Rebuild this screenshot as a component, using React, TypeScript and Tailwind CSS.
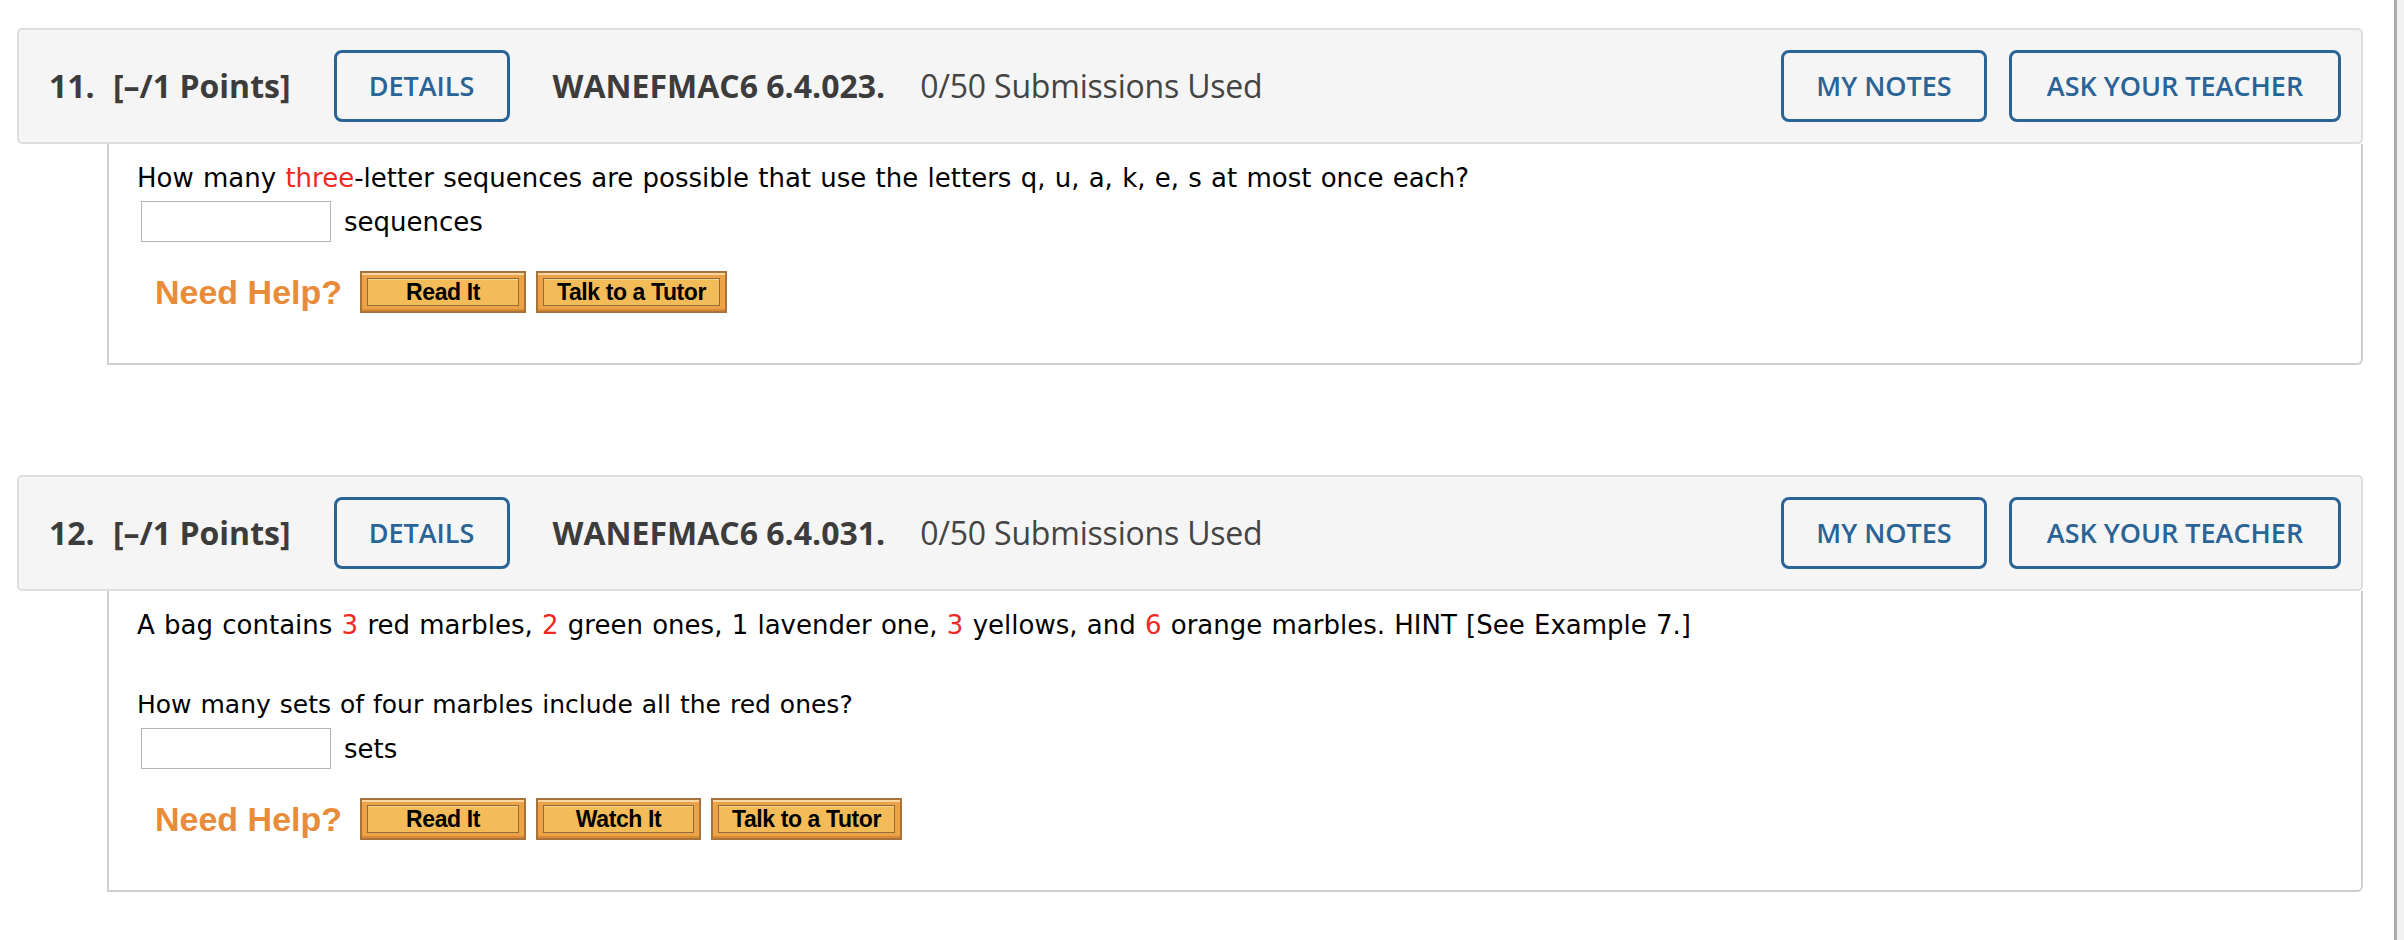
import React from "react";

const Red = ({ children }: { children: React.ReactNode }) => (
  <span className="text-[#ec2a22]">{children}</span>
);

const BlueButton = ({ label, w }: { label: string; w: string }) => (
  <div
    className={`${w} h-[72px] shrink-0 rounded-[8px] border-[3px] border-[#2a6395] flex items-center justify-center text-[27px] font-semibold text-[#2a6395] font-['Open_Sans',sans-serif]`}
  >
    {label}
  </div>
);

const OrangeButton = ({ label, w }: { label: string; w: string }) => (
  <div
    className={`${w} h-[42px] shrink-0 border-2 border-[#a8733b] bg-[#eea246] p-[5px] shadow-[inset_0_2px_0_#fcd6a0,inset_0_-2px_0_#d98a34]`}
  >
    <div className="h-full border border-[#8e6c3e] bg-[#f3bc58] shadow-[inset_0_1px_0_#f8d48a] flex items-center justify-center font-['Liberation_Sans',Arial,sans-serif] font-bold text-[23px] tracking-[-0.4px] text-black leading-none">
      {label}
    </div>
  </div>
);

const Header = ({ num, code }: { num: string; code: string }) => (
  <div className="h-[116px] rounded-[5px] border-2 border-[#dedede] bg-[#f5f5f5] flex items-center pl-[30px] pr-[20px] font-['Open_Sans',sans-serif] text-[32px] text-[#3c3c3c]">
    <span className="w-[64px] shrink-0 font-bold">{num}</span>
    <span className="font-bold">[–/1 Points]</span>
    <div className="ml-[43px]">
      <BlueButton label="DETAILS" w="w-[176px]" />
    </div>
    <span className="ml-[43px] font-bold">{code}</span>
    <span className="ml-[35px] text-[#444444] tracking-[-0.2px]">0/50 Submissions Used</span>
    <div className="flex-1" />
    <BlueButton label="MY NOTES" w="w-[206px]" />
    <div className="ml-[22px]">
      <BlueButton label="ASK YOUR TEACHER" w="w-[332px]" />
    </div>
  </div>
);

const HelpRow = ({ watch }: { watch?: boolean }) => (
  <div className="mt-[29px] flex items-center pl-[18px] [word-spacing:0px]">
    <span className="w-[205px] shrink-0 font-['Liberation_Sans',Arial,sans-serif] font-bold text-[34px] leading-[34px] text-[#e88c3a]">
      Need Help?
    </span>
    <div className="flex gap-[10px]">
      <OrangeButton label="Read It" w="w-[166px]" />
      {watch && <OrangeButton label="Watch It" w="w-[165px]" />}
      <OrangeButton label="Talk to a Tutor" w="w-[191px]" />
    </div>
  </div>
);

const AnswerRow = ({ unit }: { unit: string }) => (
  <div className="mt-[8px] flex items-center">
    <div className="ml-[4px] w-[190px] h-[41px] border border-[#b4b4b4] bg-white" />
    <span className="ml-[13px] leading-[30px]">{unit}</span>
  </div>
);

const Body = ({ children }: { children: React.ReactNode }) => (
  <div className="ml-[90px] border-x-2 border-b-2 border-[#cecece] rounded-br-[6px] bg-white pl-[28px] pt-[19px] pb-[50px] font-['DejaVu_Sans',Verdana,sans-serif] text-[26px] leading-[30px] [word-spacing:1px] text-black">
    {children}
  </div>
);

export default function App() {
  return (
    <div className="flex w-[2404px] min-h-[940px] bg-white">
      <div className="flex-1 pt-[28px] pl-[17px] pr-[31px]">
        <Header num="11." code="WANEFMAC6 6.4.023." />
        <Body>
          <p>
            How many <Red>three</Red>-letter sequences are possible that use the letters q, u, a, k, e, s at most once each?
          </p>
          <AnswerRow unit="sequences" />
          <HelpRow />
        </Body>

        <div className="mt-[110px]">
          <Header num="12." code="WANEFMAC6 6.4.031." />
          <Body>
            <p>
              A bag contains <Red>3</Red> red marbles, <Red>2</Red> green ones, 1 lavender one, <Red>3</Red> yellows, and{" "}
              <Red>6</Red> orange marbles. HINT [See Example 7.]
            </p>
            <p className="mt-[50px] text-[25px]">How many sets of four marbles include all the red ones?</p>
            <AnswerRow unit="sets" />
            <HelpRow watch />
          </Body>
        </div>
      </div>
      <div className="w-[10px] shrink-0 border-l-[3px] border-[#ababab] bg-[#f1f1f1]" />
    </div>
  );
}
